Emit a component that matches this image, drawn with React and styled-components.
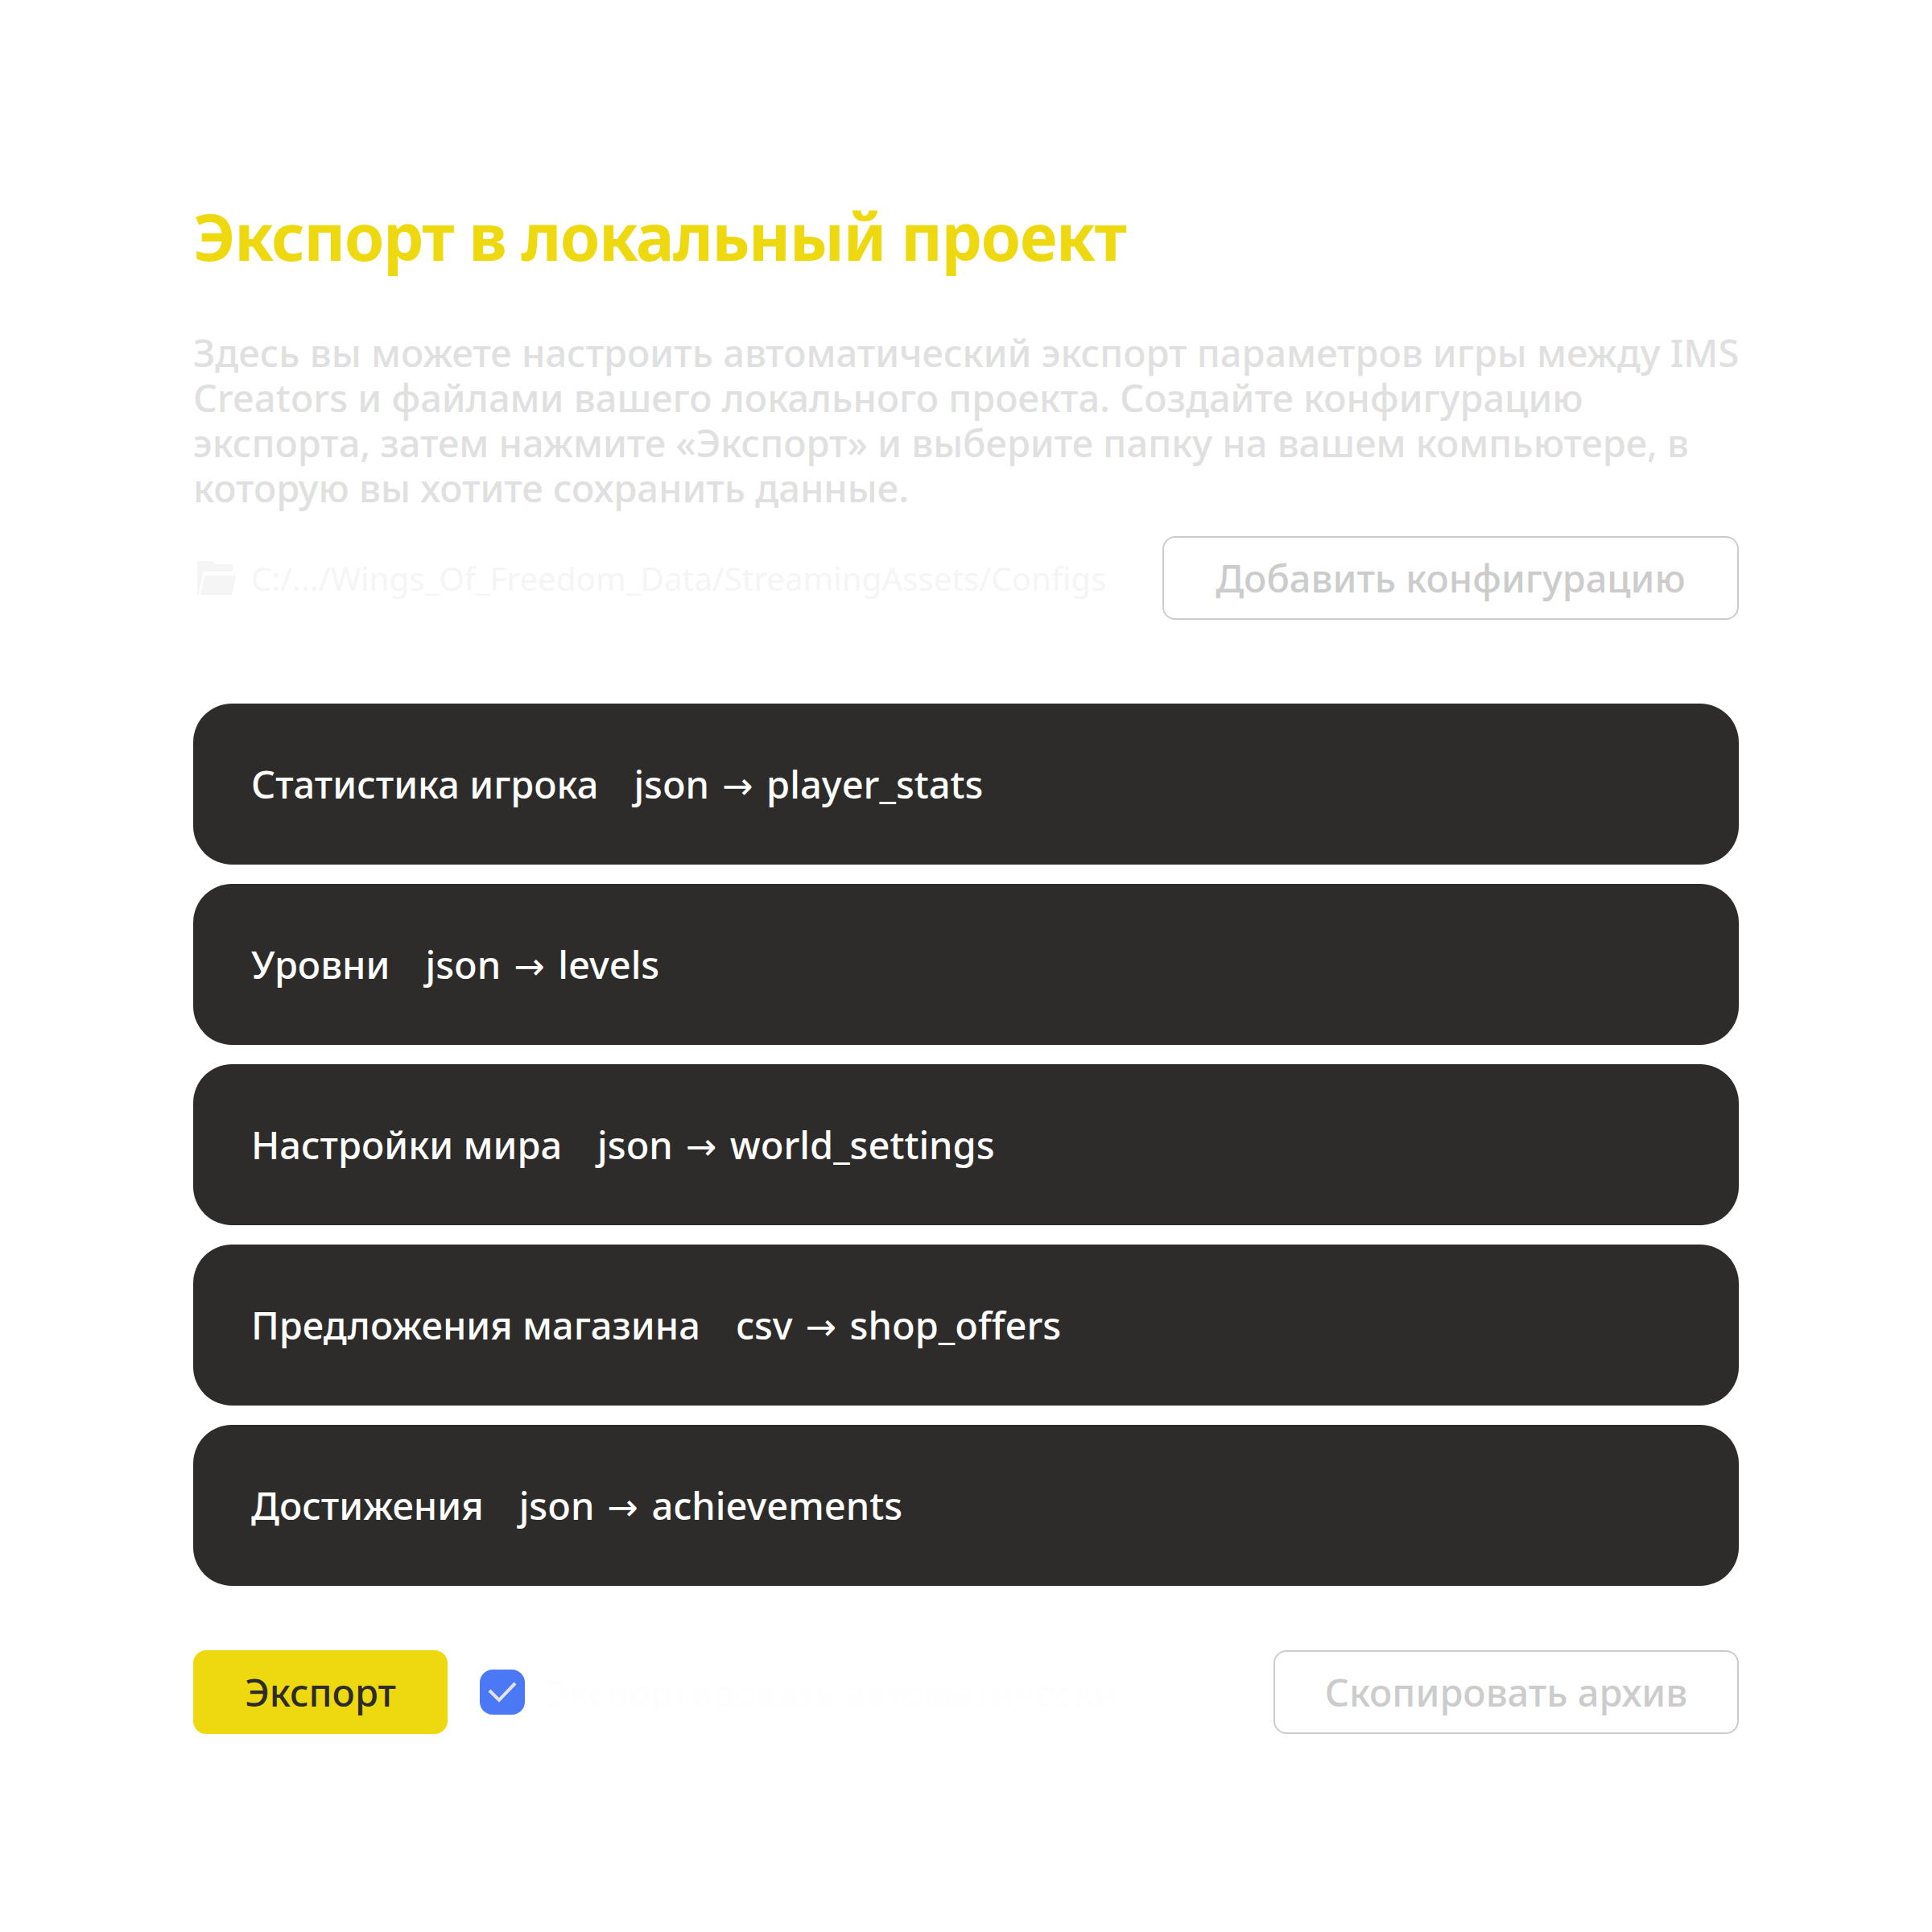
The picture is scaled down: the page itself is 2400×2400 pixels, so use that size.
import styled, { createGlobalStyle } from 'styled-components';

const GlobalStyle = createGlobalStyle`
  html, body {
    margin: 0;
    background: #fff;
  }
  body {
    font-family: "Noto Sans", "Open Sans", sans-serif;
  }
`;

const configs = [
  { name: 'Статистика игрока', format: 'json', target: 'player_stats' },
  { name: 'Уровни', format: 'json', target: 'levels' },
  { name: 'Настройки мира', format: 'json', target: 'world_settings' },
  { name: 'Предложения магазина', format: 'csv', target: 'shop_offers' },
  { name: 'Достижения', format: 'json', target: 'achievements' },
];

const FolderIcon = () => (
  <svg width="48" height="42" viewBox="0 0 48 42">
    <path
      fill="#f5f5f5"
      d="M0 2a2 2 0 0 1 2-2h16l5 4h19a2 2 0 0 1 2 2v7H9a2 2 0 0 0-2 1.600L1.500 42H1a1 1 0 0 1-1-1z"
    />
    <path
      fill="#f5f5f5"
      d="M9.500 18H47a1 1 0 0 1 1 1.200L43 41a1 1 0 0 1-1 1H3.500z"
    />
  </svg>
);

const CheckIcon = () => (
  <svg width="56" height="56" viewBox="0 0 56 56">
    <path d="M12 26l12 12 20-21" fill="none" stroke="#e2e2e2" strokeWidth="4" />
  </svg>
);

export default function App() {
  return (
    <>
      <GlobalStyle />
      <Page>
        <Title>Экспорт в локальный проект</Title>
        <Description>
          Здесь вы можете настроить автоматический экспорт параметров игры между IMS<br />
          Creators и файлами вашего локального проекта. Создайте конфигурацию<br />
          экспорта, затем нажмите «Экспорт» и выберите папку на вашем компьютере, в<br />
          которую вы хотите сохранить данные.
        </Description>
        <PathRow>
          <PathInfo>
            <FolderIcon />
            <PathText>C:/.../Wings_Of_Freedom_Data/StreamingAssets/Configs</PathText>
          </PathInfo>
          <GhostButton $width="716px">Добавить конфигурацию</GhostButton>
        </PathRow>
        <ConfigList>
          {configs.map((item) => (
            <ConfigRow key={item.target}>
              <span>{item.name}</span>
              <span>{item.format} <Arrow>→</Arrow> {item.target}</span>
            </ConfigRow>
          ))}
        </ConfigList>
        <Footer>
          <ExportButton>Экспорт</ExportButton>
          <Checkbox><CheckIcon /></Checkbox>
          <CheckboxLabel>Экспортировать автоматически</CheckboxLabel>
          <GhostButton $width="578px">Скопировать архив</GhostButton>
        </Footer>
      </Page>
    </>
  );
}

const Page = styled.div`
  width: 1920px;
  height: 2400px;
  box-sizing: border-box;
  margin: 0 auto;
  padding-top: 238px;
`;

const Title = styled.h1`
  margin: 0;
  font-size: 80px;
  line-height: 110px;
  font-weight: 700;
  letter-spacing: -1.6px;
  color: #eed911;
`;

const Description = styled.p`
  margin: 62px 0 0;
  font-size: 47px;
  line-height: 56px;
  font-weight: 500;
  color: #e0e0e0;
  white-space: nowrap;
`;

const PathRow = styled.div`
  display: flex;
  align-items: center;
  justify-content: space-between;
  margin-top: 32px;
`;

const PathInfo = styled.div`
  display: flex;
  align-items: center;
  gap: 19px;
  padding-left: 5px;
`;

const PathText = styled.span`
  font-size: 40.300px;
  color: #f5f5f5;
  white-space: nowrap;
`;

const GhostButton = styled.button`
  width: ${(p) => p.$width};
  height: 104px;
  flex: none;
  box-sizing: border-box;
  border: 2px solid #cccccc;
  border-radius: 16px;
  background: #fff;
  color: #cccccc;
  font-family: inherit;
  font-size: 47px;
  font-weight: 500;
  padding: 0;
`;

const ConfigList = styled.div`
  display: flex;
  flex-direction: column;
  gap: 24px;
  margin-top: 104px;
`;

const ConfigRow = styled.div`
  display: flex;
  align-items: center;
  gap: 44px;
  height: 200px;
  padding: 0 72px;
  border-radius: 48px;
  background: #2d2c2a;
  color: #fff;
  font-size: 47px;
  font-weight: 500;
`;

const Arrow = styled.span`
  margin: 0 4px;
  font-family: "DejaVu Sans", sans-serif;
  font-size: 46px;
  font-weight: 400;
  line-height: 1;
`;

const Footer = styled.div`
  display: flex;
  align-items: center;
  margin-top: 80px;
`;

const ExportButton = styled.button`
  width: 316px;
  height: 104px;
  flex: none;
  border: none;
  border-radius: 16px;
  background: #eed911;
  color: #2d2c2a;
  font-family: inherit;
  font-size: 47px;
  font-weight: 500;
  padding: 0;
`;

const Checkbox = styled.div`
  width: 56px;
  height: 56px;
  flex: none;
  margin-left: 40px;
  border-radius: 16px;
  background: #4b78f5;

  svg {
    display: block;
  }
`;

const CheckboxLabel = styled.span`
  flex: 1;
  margin-left: 25px;
  font-size: 45px;
  font-weight: 500;
  color: #fefefe;
  white-space: nowrap;
  overflow: hidden;
`;
